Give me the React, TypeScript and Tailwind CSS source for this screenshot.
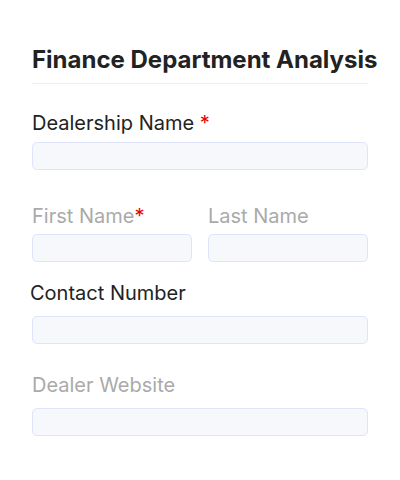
export default function App() {
    const inputClass = "h-7 w-full rounded-[5px] border border-[#dfe4fa] bg-[#f7f8fb]"

    return (
        <div className="min-h-[480px] bg-white font-['Inter',sans-serif]">
            <div className="w-[336px] ml-8 pt-[46px]">
                <h1 className="whitespace-nowrap text-[24px] leading-7 font-bold text-[#222]">Finance Department Analysis</h1>
                <div className="mt-[9px] h-px bg-[#eeeeee]" />

                <div className="mt-[27px] text-[20px] leading-6 text-[#222]">
                    Dealership Name <span className="text-[#e00]">*</span>
                </div>
                <div className={`mt-[7px] ${inputClass}`} />

                <div className="mt-[34px] grid grid-cols-2 gap-4">
                    <div>
                        <div className="text-[20px] leading-6 text-[#aaa]">First Name<span className="text-[#e00]">*</span></div>
                        <div className={`mt-[6px] ${inputClass}`} />
                    </div>
                    <div>
                        <div className="text-[20px] leading-6 text-[#aaa]">Last Name</div>
                        <div className={`mt-[6px] ${inputClass}`} />
                    </div>
                </div>

                <div className="mt-[19px] -ml-[2px] text-[20px] leading-6 text-[#222]">Contact Number</div>
                <div className={`mt-[11px] ${inputClass}`} />

                <div className="mt-[29px] text-[20px] leading-6 text-[#aaa]">Dealer Website</div>
                <div className={`mt-[11px] ${inputClass}`} />
            </div>
        </div>
    )
}
